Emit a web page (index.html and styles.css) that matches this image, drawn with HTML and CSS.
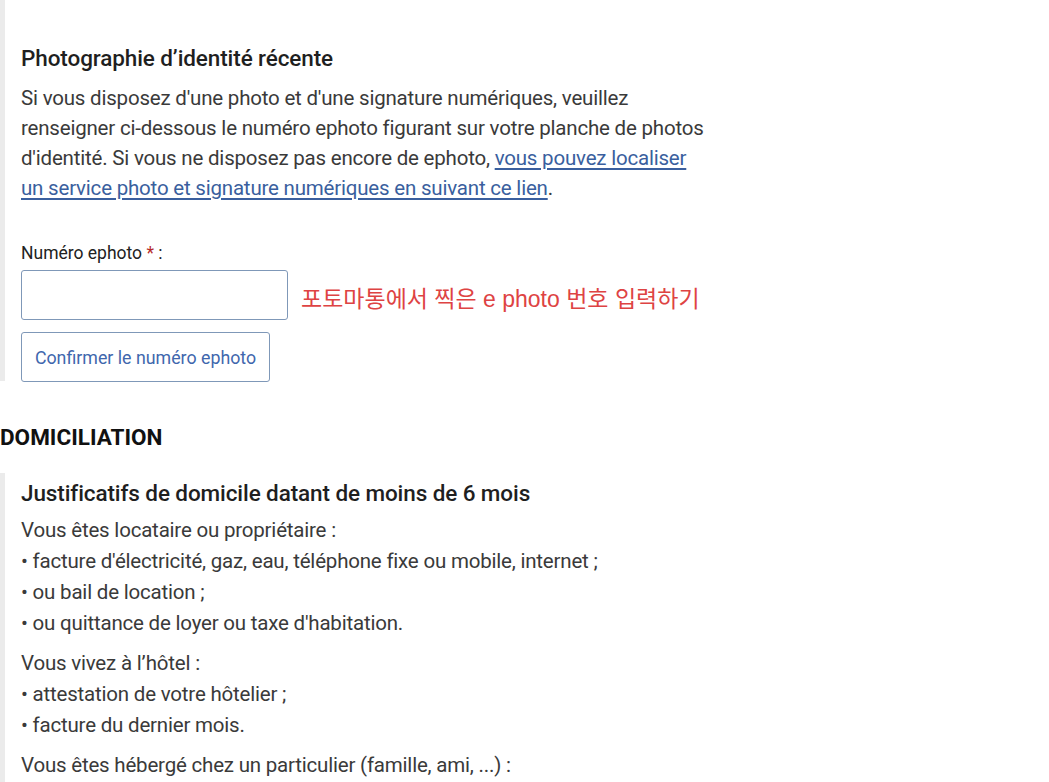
FILE: index.html
```html
<!DOCTYPE html>
<html lang="fr">
<head>
    <meta charset="UTF-8">
    <meta name="viewport" content="width=device-width, initial-scale=1.0">
    <link rel="stylesheet" href="styles.css">
</head>
<body>
    <div class="bloc">
        <h3 class="bloc-title">Photographie d’identité récente</h3>
        <p class="text">Si vous disposez d'une photo et d'une signature numériques, veuillez<br>
        renseigner ci-dessous le numéro ephoto figurant sur votre planche de photos<br>
        d'identité. Si vous ne disposez pas encore de ephoto, <a href="#">vous pouvez localiser<br>
        un service photo et signature numériques en suivant ce lien</a>.</p>

        <div class="field">
            <label for="ephoto">Numéro ephoto <span class="required">*</span> :</label>
            <div class="field-row">
                <input id="ephoto" type="text">
                <span class="note">포토마통에서 찍은 e photo 번호 입력하기</span>
            </div>
            <button class="btn">Confirmer le numéro ephoto</button>
        </div>
    </div>

    <h2 class="section-title">DOMICILIATION</h2>

    <div class="bloc bloc-last">
        <h3 class="bloc-title">Justificatifs de domicile datant de moins de 6 mois</h3>
        <p class="text">Vous êtes locataire ou propriétaire :<br>
        • facture d'électricité, gaz, eau, téléphone fixe ou mobile, internet ;<br>
        • ou bail de location ;<br>
        • ou quittance de loyer ou taxe d'habitation.</p>
        <p class="text">Vous vivez à l’hôtel :<br>
        • attestation de votre hôtelier ;<br>
        • facture du dernier mois.</p>
        <p class="text">Vous êtes hébergé chez un particulier (famille, ami, ...) :</p>
    </div>
</body>
</html>
```

FILE: styles.css
```css
body {
    margin: 0;
    font-family: Roboto, "Noto Sans", sans-serif;
    color: #3a3a3a;
    background: #fff;
    overflow: hidden;
}
.bloc {
    border-left: 5px solid #ebebeb;
    padding: 43px 0 0 16px;
    height: 338px;
}
.bloc-title {
    margin: 0 0 10px;
    font-size: 22.5px;
    font-weight: 500;
    color: #1f1f1f;
    line-height: 30px;
    letter-spacing: -0.1px;
}
.text {
    margin: 0 0 10px;
    font-size: 20.5px;
    line-height: 30px;
    letter-spacing: -0.2px;
}
.text a {
    color: #3a5f9e;
    text-decoration: underline;
    text-underline-offset: 3px;
}
.field {
    margin-top: 40px;
}
.field label {
    display: block;
    font-size: 17.5px;
    line-height: 20px;
    color: #222;
    margin-bottom: 7px;
}
.required {
    color: #b52a2a;
}
.field-row {
    display: flex;
    align-items: center;
    gap: 13px;
}
.field-row input {
    width: 267px;
    height: 50px;
    box-sizing: border-box;
    border: 1.5px solid #7f98b8;
    border-radius: 3px;
}
.note {
    font-family: "Liberation Sans", "Noto Sans CJK KR", sans-serif;
    color: #de4343;
    font-size: 23px;
    padding-top: 3px;
}
.btn {
    margin-top: 12px;
    width: 249px;
    height: 50px;
    background: #fff;
    border: 1.5px solid #7f98b8;
    border-radius: 3px;
    font-family: Roboto, sans-serif;
    font-size: 17.8px;
    color: #3f67ad;
    cursor: pointer;
}
.section-title {
    margin: 41px 0 21px;
    font-size: 22.5px;
    font-weight: 700;
    color: #111;
    line-height: 30px;
}
.bloc-last {
    padding-top: 5px;
    height: auto;
    min-height: 400px;
}
.bloc-last .bloc-title {
    margin-bottom: 7px;
}
.bloc-last .text {
    line-height: 31px;
    margin-bottom: 9px;
}
```
